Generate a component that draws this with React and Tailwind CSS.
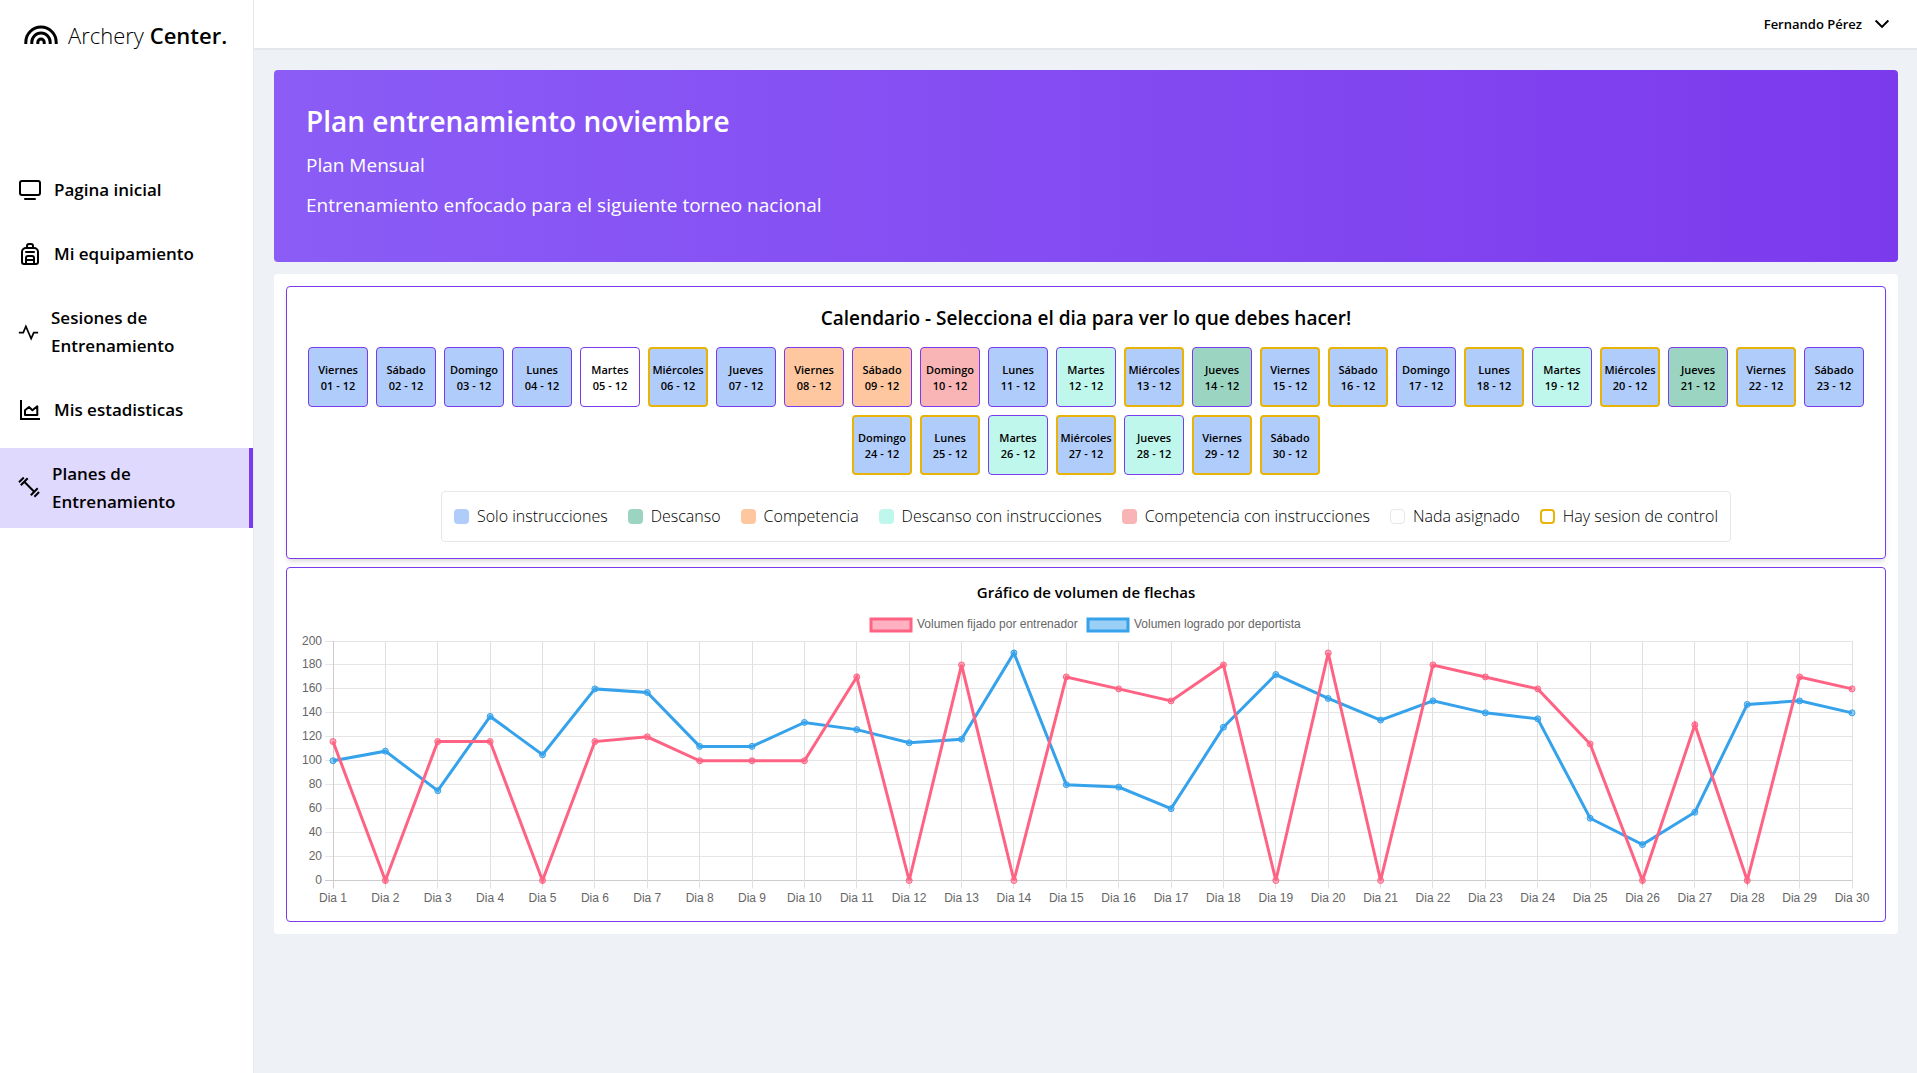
import React, { useState } from "react";
import { CgChevronDown } from "react-icons/cg";
import { RiPulseLine } from "react-icons/ri";
import { LuBackpack } from "react-icons/lu";

const nombresDias = [
  "Domingo",
  "Lunes",
  "Martes",
  "Miércoles",
  "Jueves",
  "Viernes",
  "Sábado",
];

const colores = {
  instrucciones: "bg-[#b0ccfb]",
  descanso: "bg-[#9bd5c2]",
  competencia: "bg-[#fec7a0]",
  descansoInstrucciones: "bg-[#bff7ec]",
  competenciaInstrucciones: "bg-[#f9b5b5]",
  nada: "bg-white",
};

// dias que no son "solo instrucciones"
const tiposEspeciales = {
  5: "nada",
  8: "competencia",
  9: "competencia",
  10: "competenciaInstrucciones",
  12: "descansoInstrucciones",
  14: "descanso",
  19: "descansoInstrucciones",
  21: "descanso",
  26: "descansoInstrucciones",
  28: "descansoInstrucciones",
};

const diasConControl = [6, 13, 15, 16, 18, 20, 22, 24, 25, 27, 29, 30];

const dias = Array.from({ length: 30 }, (_, i) => {
  const numero = i + 1;
  return {
    numero,
    nombre: nombresDias[(numero + 4) % 7],
    tipo: tiposEspeciales[numero] || "instrucciones",
    control: diasConControl.includes(numero),
  };
});

const leyenda = [
  { texto: "Solo instrucciones", clase: "bg-[#b0ccfb]" },
  { texto: "Descanso", clase: "bg-[#9bd5c2]" },
  { texto: "Competencia", clase: "bg-[#fec7a0]" },
  { texto: "Descanso con instrucciones", clase: "bg-[#bff7ec]" },
  { texto: "Competencia con instrucciones", clase: "bg-[#f9b5b5]" },
  { texto: "Nada asignado", clase: "border border-gray-200 bg-white" },
  { texto: "Hay sesion de control", clase: "border-2 border-[#eab308]" },
];

const volumenFijado = [
  116, 0, 116, 116, 0, 116, 120, 100, 100, 100, 170, 0, 180, 0, 170, 160, 150,
  180, 0, 190, 0, 180, 170, 160, 114, 0, 130, 0, 170, 160,
];

const volumenLogrado = [
  100, 108, 75, 137, 105, 160, 157, 112, 112, 132, 126, 115, 118, 190, 80, 78,
  60, 128, 172, 152, 134, 150, 140, 135, 52, 30, 57, 147, 150, 140,
];

function IconoPantalla() {
  return (
    <svg
      width="24"
      height="24"
      viewBox="0 0 24 24"
      fill="none"
      stroke="currentColor"
      strokeWidth="2"
      strokeLinecap="round"
      className="shrink-0"
    >
      <rect x="2" y="3" width="20" height="14" rx="2" />
      <path d="M7 21h10" />
    </svg>
  );
}

function IconoArea() {
  return (
    <svg
      width="24"
      height="24"
      viewBox="0 0 24 24"
      fill="none"
      stroke="currentColor"
      strokeWidth="2"
      className="shrink-0"
    >
      <path d="M3 2v19h19" />
      <path d="M7 17v-4.8l4-3.2 3.4 3.2 4.9-3.9V17z" strokeLinejoin="round" />
    </svg>
  );
}

function IconoPesa() {
  return (
    <svg
      width="22"
      height="22"
      viewBox="0 0 22 22"
      fill="none"
      stroke="currentColor"
      strokeWidth="2"
      className="shrink-0"
    >
      <path d="M6.3 4.8l9.9 9.9" />
      <path d="M2.8 8.2l6.9-6.9" />
      <path d="M1 5.2l4.8-4.7" />
      <path d="M12.8 18.2l6.9-6.9" />
      <path d="M16.4 19.7l4.7-4.7" />
    </svg>
  );
}

function Logo() {
  return (
    <a
      href="#"
      className="flex items-center gap-[10px] whitespace-nowrap pl-6 text-[22px] leading-[30px]"
    >
      <svg
        width="34"
        height="20"
        viewBox="0 0 34 20"
        fill="none"
        stroke="currentColor"
        strokeWidth="3"
        className="shrink-0"
      >
        <path d="M1.8 19v-1.8a15.2 15.2 0 0 1 30.4 0V19" />
        <path d="M7.8 19v-1.8a9.2 9.2 0 0 1 18.4 0V19" />
        <path d="M13.8 19v-1.8a3.2 3.2 0 0 1 6.4 0V19" />
      </svg>
      <span>
        <span className="font-light">Archery</span>{" "}
        <span className="font-semibold">Center.</span>
      </span>
    </a>
  );
}

const enlaces = [
  { texto: "Pagina inicial", icono: <IconoPantalla /> },
  { texto: "Mi equipamiento", icono: <LuBackpack size={24} className="shrink-0" /> },
  {
    texto: "Sesiones de Entrenamiento",
    icono: <RiPulseLine size={21} className="shrink-0" />,
  },
  { texto: "Mis estadisticas", icono: <IconoArea /> },
  { texto: "Planes de Entrenamiento", icono: <IconoPesa />, activo: true },
];

function Sidebar() {
  return (
    <aside className="w-[254px] shrink-0 border-r border-gray-200 bg-white pt-5">
      <Logo />
      <nav className="mt-[114px] flex flex-col gap-3">
        {enlaces.map((enlace) => (
          <a
            key={enlace.texto}
            href="#"
            className={`flex items-center gap-3 py-3 pl-[18px] pr-12 text-[17px] font-semibold leading-7 ${
              enlace.activo ? "border-r-4 border-[#7c3aed] bg-[#e0d9fe]" : ""
            }`}
          >
            {enlace.icono}
            <span>{enlace.texto}</span>
          </a>
        ))}
      </nav>
    </aside>
  );
}

function Calendario() {
  const [seleccionado, setSeleccionado] = useState(null);

  return (
    <section className="flex flex-col items-center rounded border border-[#7c3aed] px-5 py-4 shadow-md">
      <h2 className="mb-[14px] text-[19px] font-semibold leading-[30px]">
        Calendario - Selecciona el dia para ver lo que debes hacer!
      </h2>
      <div className="flex flex-wrap justify-center gap-2">
        {dias.map((dia) => (
          <button
            key={dia.numero}
            type="button"
            aria-pressed={seleccionado === dia.numero}
            onClick={() => setSeleccionado(dia.numero)}
            className={`flex h-[60px] w-[60px] flex-col items-center justify-center rounded pt-px text-[11px] font-semibold leading-4 ${
              colores[dia.tipo]
            } ${
              dia.control
                ? "border-2 border-[#eab308]"
                : "border border-[#7c3aed]"
            }`}
          >
            <span>{dia.nombre}</span>
            <span>{String(dia.numero).padStart(2, "0")} - 12</span>
          </button>
        ))}
      </div>
      <ul className="mt-4 flex flex-wrap gap-x-5 rounded border border-gray-200 px-3 py-3 text-base font-light leading-[25px]">
        {leyenda.map((item) => (
          <li key={item.texto} className="flex items-center gap-2">
            <span className={`h-[15px] w-[15px] rounded ${item.clase}`} />
            {item.texto}
          </li>
        ))}
      </ul>
    </section>
  );
}

const ANCHO = 1568;
const ALTO = 299;
const IZQ = 31;
const DER = 1550;
const ARRIBA = 34;
const ABAJO = 273.5;

const posX = (i) => IZQ + (i * (DER - IZQ)) / 29;
const posY = (v) => ABAJO - (v * (ABAJO - ARRIBA)) / 200;

function Serie({ datos, color, relleno }) {
  return (
    <g>
      <polyline
        points={datos.map((v, i) => `${posX(i)},${posY(v)}`).join(" ")}
        fill="none"
        stroke={color}
        strokeWidth="3"
      />
      {datos.map((v, i) => (
        <circle
          key={i}
          cx={posX(i)}
          cy={posY(v)}
          r="3"
          fill={relleno}
          stroke={color}
          strokeWidth="1"
        />
      ))}
    </g>
  );
}

function Grafico() {
  const marcas = Array.from({ length: 11 }, (_, i) => i * 20);

  return (
    <section className="flex flex-col items-center rounded border border-[#7c3aed] p-[15px]">
      <h2 className="mb-[6px] text-[15px] font-semibold leading-[18px]">
        Gráfico de volumen de flechas
      </h2>
      <svg
        viewBox={`0 0 ${ANCHO} ${ALTO}`}
        className="w-full overflow-visible font-['Liberation_Sans',Arial,sans-serif] text-[12px]"
        role="img"
        aria-label="Gráfico de volumen de flechas"
      >
        {/* leyenda */}
        <g strokeWidth="3">
          <rect x="569" y="12" width="40" height="12" fill="#ffb1c1" stroke="#ff6384" />
          <rect x="786" y="12" width="40" height="12" fill="#9ad0f5" stroke="#35a2eb" />
        </g>
        <g fill="#666">
          <text x="615" y="21">Volumen fijado por entrenador</text>
          <text x="832" y="21">Volumen logrado por deportista</text>
        </g>

        {/* cuadricula */}
        {marcas.map((v) => {
          const y = Math.floor(posY(v)) + 0.5;
          return (
            <g key={v}>
              <line
                x1={IZQ - 8}
                x2={DER}
                y1={y}
                y2={y}
                stroke={v === 0 ? "#ccc" : "#e5e5e5"}
              />
              <text x={IZQ - 11} y={y + 3} textAnchor="end" fill="#666">
                {v}
              </text>
            </g>
          );
        })}
        {volumenFijado.map((_, i) => {
          const x = Math.floor(posX(i)) + 0.5;
          return (
            <g key={i}>
              <line
                x1={x}
                x2={x}
                y1={ARRIBA}
                y2={ABAJO + 8}
                stroke={i === 0 ? "#ccc" : "#e0e0e0"}
              />
              <text x={posX(i)} y={ABAJO + 21} textAnchor="middle" fill="#666">
                Dia {i + 1}
              </text>
            </g>
          );
        })}

        <Serie
          datos={volumenLogrado}
          color="rgb(53,162,235)"
          relleno="rgba(53,162,235,0.5)"
        />
        <Serie
          datos={volumenFijado}
          color="rgb(255,99,132)"
          relleno="rgba(255,99,132,0.5)"
        />
      </svg>
    </section>
  );
}

function App() {
  return (
    <div className="flex min-h-screen bg-[#eef1f6] font-['Open_Sans','Segoe_UI',sans-serif] text-black">
      <Sidebar />
      <div className="flex min-w-0 grow flex-col">
        <header className="flex h-[50px] items-center justify-end border-b-2 border-gray-200 bg-white px-[23px]">
          <button
            type="button"
            className="flex items-center gap-2 text-[13px] font-semibold leading-5"
          >
            Fernando Pérez
            <CgChevronDown size={24} />
          </button>
        </header>
        <main className="flex flex-col gap-3 py-5 pl-5 pr-[19px]">
          <section className="flex flex-col rounded bg-linear-to-r/srgb from-[#8b5cf6] to-[#7c3aed] px-8 pb-[43px] pt-8 text-white">
            <h1 className="mb-[11px] text-[28px] font-semibold leading-[38px]">
              Plan entrenamiento noviembre
            </h1>
            <p className="mb-3 text-[19px] leading-7">Plan Mensual</p>
            <p className="text-[19px] leading-7">
              Entrenamiento enfocado para el siguiente torneo nacional
            </p>
          </section>
          <div className="flex flex-col gap-2 rounded bg-white p-3">
            <Calendario />
            <Grafico />
          </div>
        </main>
      </div>
    </div>
  );
}

export default App;
